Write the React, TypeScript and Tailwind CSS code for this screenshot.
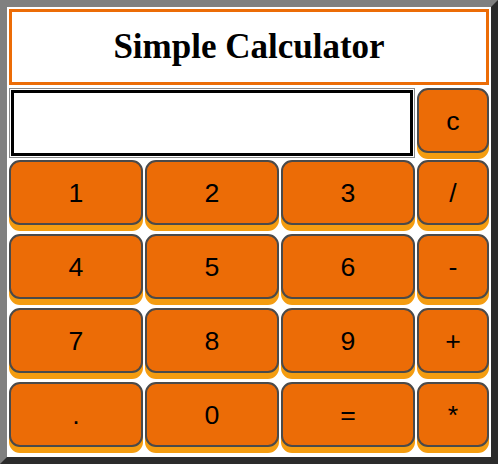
const KEYS = [
  ["1", "2", "3", "/"],
  ["4", "5", "6", "-"],
  ["7", "8", "9", "+"],
  [".", "0", "=", "*"],
];

const Key = ({ label }: { label: string }) => (
  <button className="h-[65px] w-full rounded-[11px] border-2 border-[#4a4a4a] bg-[#ec6c06] text-[26.67px] text-black shadow-[0_6px_0_#f49c10] font-['Liberation_Sans',Arial,sans-serif]">
    {label}
  </button>
);

export default function App() {
  return (
    <div className="w-[498px] h-[464px] border-[7px] border-t-[#808080] border-l-[#808080] border-r-[#2b2b2b] border-b-[#2b2b2b] bg-white p-[2px]">
      <div className="flex h-[76px] w-[480px] items-center justify-center border-[3px] border-[#ec6c06] bg-white">
        <h1 className="text-[35px] font-bold text-black font-['Liberation_Serif','Times_New_Roman',serif]">
          Simple Calculator
        </h1>
      </div>
      <div className="mt-[3px] grid grid-cols-[134px_134px_134px_72px] gap-x-[2px] gap-y-[2px]">
        <div className="col-span-3 h-[70px] border border-[#888888] bg-white p-px">
          <div className="h-full w-full border-[3px] border-black bg-white" />
        </div>
        <div className="h-[70px]">
          <Key label="c" />
        </div>
        {KEYS.flat().map((k) => (
          <div key={k} className="h-[72px]">
            <Key label={k} />
          </div>
        ))}
      </div>
    </div>
  );
}
